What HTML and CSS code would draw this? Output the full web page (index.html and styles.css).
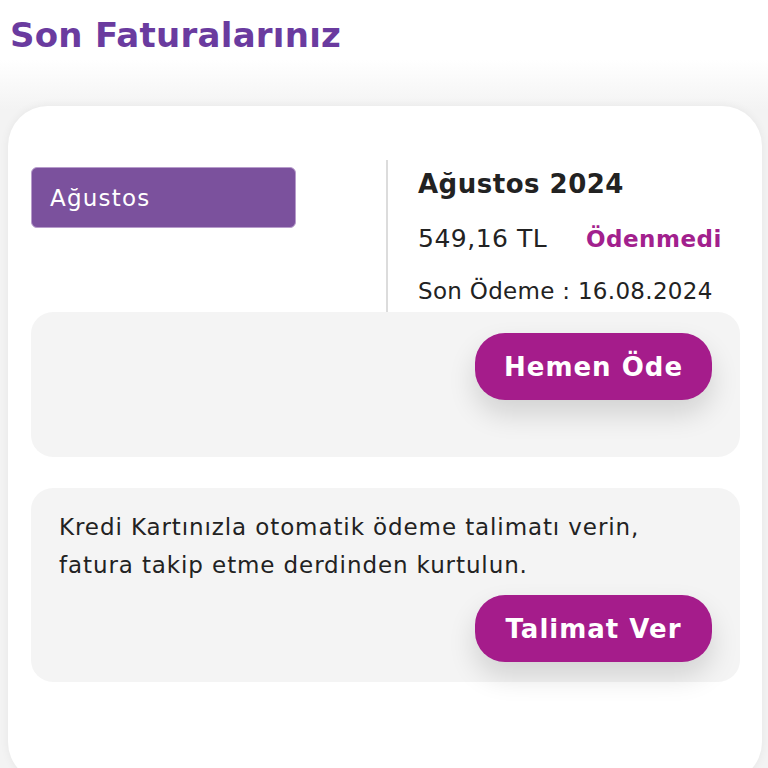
FILE: index.html
```html
<!DOCTYPE html>
<html lang="tr">
<head>
<meta charset="utf-8">
<link rel="stylesheet" href="styles.css">
</head>
<body>
<div class="page">
  <h1 class="title">Son Faturalarınız</h1>
  <div class="card">
    <div class="bill">
      <div class="left">
        <div class="select">Ağustos</div>
      </div>
      <div class="right">
        <div class="month">Ağustos 2024</div>
        <div class="amount-row">
          <span class="amount">549,16 TL</span>
          <span class="status">Ödenmedi</span>
        </div>
        <div class="due">Son Ödeme : 16.08.2024</div>
      </div>
    </div>
    <div class="panel pay-panel">
      <button class="btn">Hemen Öde</button>
    </div>
    <div class="panel auto-panel">
      <p class="info">Kredi Kartınızla otomatik ödeme talimatı verin,<br>fatura takip etme derdinden kurtulun.</p>
      <button class="btn">Talimat Ver</button>
    </div>
  </div>
</div>
</body>
</html>
```

FILE: styles.css
```css
* { box-sizing: border-box; }
html, body { margin: 0; padding: 0; }
body {
  font-family: "DejaVu Sans", Inter, sans-serif;
  background: #f3f3f3;
  width: 768px;
  height: 768px;
  overflow: hidden;
}
.page {
  background: linear-gradient(#ffffff 0px, #ffffff 60px, #f3f3f3 110px);
  height: 768px;
  padding: 0 6px 0 8px;
}
.title {
  margin: 0;
  padding: 15px 0 0 2px;
  height: 106px;
  font-size: 34px;
  font-weight: 700;
  letter-spacing: 0.25px;
  color: #6a3b9f;
}
.card {
  background: #fff;
  border-radius: 40px;
  box-shadow: 0 0 10px rgba(0,0,0,0.06);
  padding: 54px 22px 0 23px;
  height: 676px;
}
.bill {
  display: flex;
  height: 152px;
}
.left {
  width: 355px;
  padding-top: 7px;
}
.select {
  width: 265px;
  height: 61px;
  background: #7b519d;
  border: 1px solid #b79ccb;
  border-radius: 6px;
  color: #fff;
  font-size: 23px;
  letter-spacing: 1.2px;
  padding: 0 0 0 18px;
  display: flex;
  align-items: center;
}
.right {
  border-left: 2px solid #dcdcdc;
  padding-left: 30px;
  flex: 1;
}
.month {
  font-size: 26px;
  font-weight: 700;
  letter-spacing: 0.5px;
  color: #222;
  margin-top: 8px;
  line-height: 32px;
}
.amount-row {
  display: flex;
  align-items: baseline;
  margin-top: 22px;
  line-height: 34px;
}
.amount {
  font-size: 25px;
  letter-spacing: 0.5px;
  color: #222;
  width: 168px;
}
.status {
  font-size: 23px;
  font-weight: 700;
  letter-spacing: 0.5px;
  color: #a2208d;
}
.due {
  font-size: 23px;
  letter-spacing: 0.3px;
  color: #222;
  margin-top: 20px;
  line-height: 30px;
}
.panel {
  background: #f4f4f4;
  border-radius: 22px;
  width: 709px;
  display: flex;
  flex-direction: column;
  align-items: flex-end;
  padding-right: 28px;
}
.pay-panel {
  height: 145px;
  padding-top: 21px;
}
.auto-panel {
  margin-top: 31px;
  height: 194px;
  padding-left: 28px;
  padding-top: 20px;
  align-items: stretch;
}
.info {
  margin: 0;
  font-size: 23px;
  letter-spacing: 0.9px;
  line-height: 38px;
  color: #222;
}
.btn {
  width: 237px;
  height: 67px;
  border: none;
  border-radius: 30px;
  background: #a51c8b;
  color: #fff;
  font-family: inherit;
  font-size: 26px;
  font-weight: 700;
  letter-spacing: 1px;
  box-shadow: 0 14px 28px rgba(0,0,0,0.14);
}
.auto-panel .btn {
  align-self: flex-end;
  margin-top: 11px;
}
```
